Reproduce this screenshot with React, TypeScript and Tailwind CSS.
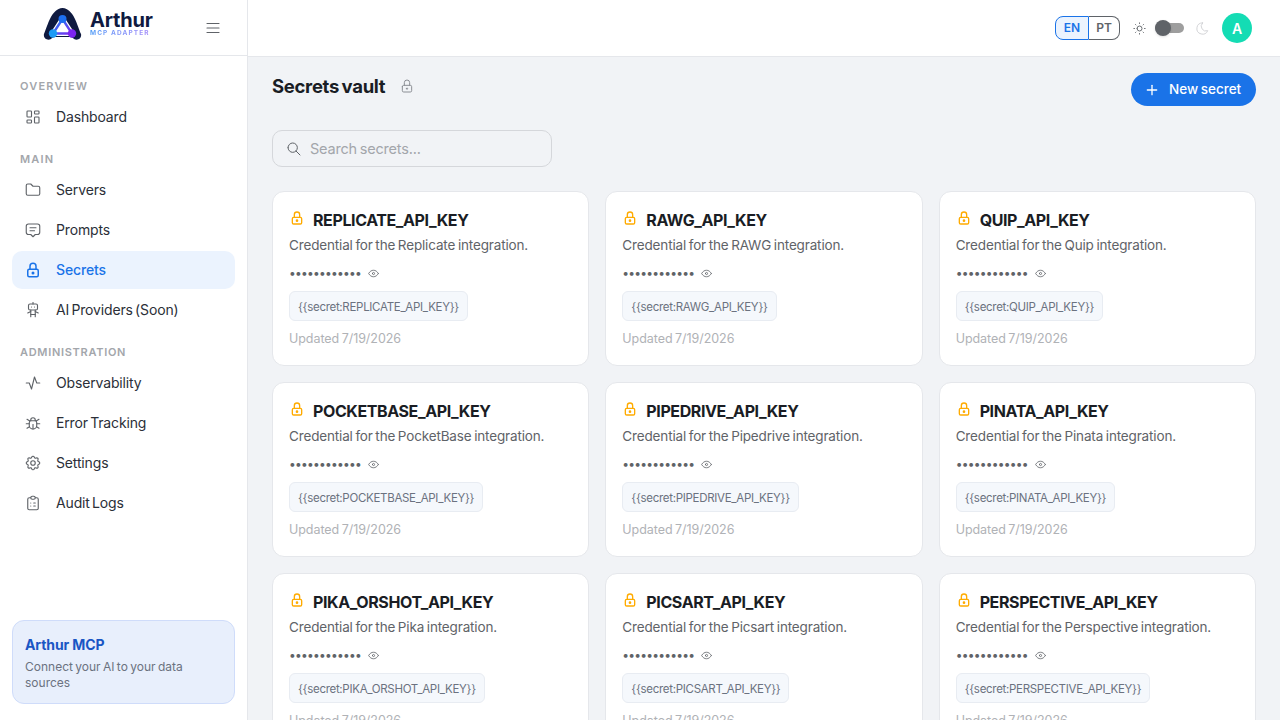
import { TbLayoutDashboard, TbFolder, TbMessage2, TbLock, TbRobot, TbActivity, TbBug, TbSettings, TbClipboardList, TbMenu2, TbSun, TbMoon, TbPlus, TbEye, TbSearch } from "react-icons/tb"

const sections = [
  { title: "OVERVIEW", top: "pt-[22px]", track: "tracking-[1.2px]", items: [{ label: "Dashboard", icon: TbLayoutDashboard }] },
  {
    title: "MAIN",
    top: "pt-[15px]",
    track: "tracking-[1.2px]",
    items: [
      { label: "Servers", icon: TbFolder },
      { label: "Prompts", icon: TbMessage2 },
      { label: "Secrets", icon: TbLock, active: true },
      { label: "AI Providers (Soon)", icon: TbRobot },
    ],
  },
  {
    title: "ADMINISTRATION",
    top: "pt-[15px]",
    track: "tracking-[0.7px]",
    items: [
      { label: "Observability", icon: TbActivity },
      { label: "Error Tracking", icon: TbBug },
      { label: "Settings", icon: TbSettings },
      { label: "Audit Logs", icon: TbClipboardList },
    ],
  },
]

const secrets = [
  { key: "REPLICATE_API_KEY", name: "Replicate" },
  { key: "RAWG_API_KEY", name: "RAWG" },
  { key: "QUIP_API_KEY", name: "Quip" },
  { key: "POCKETBASE_API_KEY", name: "PocketBase" },
  { key: "PIPEDRIVE_API_KEY", name: "Pipedrive" },
  { key: "PINATA_API_KEY", name: "Pinata" },
  { key: "PIKA_ORSHOT_API_KEY", name: "Pika" },
  { key: "PICSART_API_KEY", name: "Picsart" },
  { key: "PERSPECTIVE_API_KEY", name: "Perspective" },
]

function Logo() {
  return (
    <div className="flex items-center gap-[8px] mb-[8px] ml-[-1px]">
      <svg width="39" height="32" viewBox="0 0 39 32">
        <defs>
          <linearGradient id="tri" x1="0" y1="0" x2="1" y2="1">
            <stop offset="0" stopColor="#1d7cf2" />
            <stop offset="1" stopColor="#7c2ff0" />
          </linearGradient>
        </defs>
        <path d="M1 26C5 17 8 1 19.500 0 31 1 34 17 38 26c1 4-3 7-7 5-1-1-2-2-4-2H12c-2 0-3 1-4 2-4 2-8-1-7-5z" fill="#0f1a40" />
        <path d="M19.500 11 10 25.500h19z" fill="#ffffff" stroke="#ffffff" strokeWidth="5" strokeLinejoin="round" />
        <path d="M19.500 11 10 25.500h19z" fill="#ffffff" stroke="url(#tri)" strokeWidth="2.400" />
        <circle cx="19.500" cy="11" r="4" fill="#1d6ff0" />
        <circle cx="10" cy="25.500" r="4.200" fill="#1d9bf5" />
        <circle cx="29" cy="25.500" r="4.200" fill="#7c24f0" />
      </svg>
      <div className="flex flex-col mt-[3px]">
        <span className="text-[20px] leading-[14px] font-bold text-[#0f1a40] tracking-[-0.2px]">Arthur</span>
        <span className="text-[6.500px] leading-[7px] font-bold tracking-[1.100px] mt-[3px] bg-linear-to-r from-[#4f9cf7] to-[#a78bfa] bg-clip-text text-transparent">MCP ADAPTER</span>
      </div>
    </div>
  )
}

function Sidebar() {
  return (
    <aside className="w-[248px] shrink-0 h-full flex flex-col bg-white border-r border-[#e5e7eb]">
      <div className="h-[56px] shrink-0 border-b border-[#e5e7eb] flex items-center pl-[44px] pr-[25px] justify-between">
        <Logo />
        <TbMenu2 strokeWidth={1.5} className="w-[18px] h-[18px] text-[#5f6368]" />
      </div>
      <nav className="px-3 flex-1">
        {sections.map((s) => (
          <div key={s.title} className={s.top}>
            <div className={`px-2 text-[11px] leading-[16px] font-semibold text-[#a3a6ab] mb-[4px] ${s.track}`}>{s.title}</div>
            <div className="flex flex-col gap-[2px]">
              {s.items.map((item) => {
                const Icon = item.icon
                return (
                  <div
                    key={item.label}
                    className={
                      item.active
                        ? "h-[38px] rounded-[10px] bg-[#ebf3fe] flex items-center pl-3 gap-[14px] text-[#1a73e8] font-medium text-[14px]"
                        : "h-[38px] rounded-[10px] flex items-center pl-3 gap-[14px] text-[#2b2f38] font-normal text-[14px]"
                    }
                  >
                    <Icon
                      strokeWidth={item.active ? 2 : 1.5}
                      className={item.active ? "w-[18px] h-[18px] text-[#1a73e8] mb-[1px]" : "w-[18px] h-[18px] text-[#5f6368] mb-[1px]"}
                    />
                    <span className="pb-[1px] tracking-[-0.15px] [word-spacing:-1.500px]">{item.label}</span>
                  </div>
                )
              })}
            </div>
          </div>
        ))}
      </nav>
      <div className="mx-3 mb-4 h-[84px] rounded-[12px] bg-[#e8effc] border border-[#cfdcfa] px-3 pt-[15px]">
        <div className="text-[14px] leading-[18px] font-bold text-[#1a56c4] tracking-[-0.1px]">Arthur MCP</div>
        <div className="mt-[5px] text-[12px] leading-[16px] text-[#6b7280] [word-spacing:-1px]">Connect your AI to your data sources</div>
      </div>
    </aside>
  )
}

function Header() {
  return (
    <header className="h-[57px] shrink-0 bg-white border-b border-[#e5e7eb] flex items-center justify-end pr-[28px]">
      <div className="flex h-[24px] text-[12px] font-semibold mr-[12px]">
        <div className="w-[34px] rounded-l-[8px] border border-[#1a73e8] bg-[#ebf3fe] text-[#1a73e8] flex items-center justify-center">EN</div>
        <div className="w-[31px] rounded-r-[8px] border border-l-0 border-[#5f6368] text-[#5f6368] flex items-center justify-center">PT</div>
      </div>
      <TbSun strokeWidth={1.5} className="w-[15px] h-[15px] text-[#5f6368]" />
      <div className="relative ml-[8px] w-[29px] h-[10px] rounded-full bg-[#9e9e9e]">
        <div className="absolute left-0 top-[-3px] w-[16px] h-[16px] rounded-full bg-[#5f6368] shadow" />
      </div>
      <TbMoon strokeWidth={1.5} className="ml-[11px] w-[15px] h-[15px] text-[#d0d1d4]" />
      <div className="ml-[12px] w-[30px] h-[30px] rounded-full bg-[#14dcb4] flex items-center justify-center text-white text-[14px] font-semibold">A</div>
    </header>
  )
}

function SecretCard({ k, name }: { k: string; name: string }) {
  return (
    <div className="h-[175px] rounded-[12px] bg-white border border-[#e5e7eb] px-4 pt-[16px]">
      <div className="flex items-center gap-[8px] h-[24px]">
        <TbLock className="w-[16px] h-[16px] text-[#ffab00] mt-[-4px]" />
        <span className="text-[16px] font-bold text-[#1a1d24] tracking-[-0.4px]">{k}</span>
      </div>
      <div className="mt-[3px] text-[13.500px] leading-[21px] text-[#5f6368] tracking-[-0.15px] [word-spacing:-1px]">Credential for the {name} integration.</div>
      <div className="mt-[9px] flex items-center h-[16px] gap-[6px]">
        <span className="text-[12px] leading-[16px] text-[#5f6368] tracking-[-0.75px]">••••••••••••</span>
        <TbEye strokeWidth={1.5} className="w-[13px] h-[13px] text-[#5f6368]" />
      </div>
      <div className="mt-[10px] inline-flex items-center h-[30px] px-2 pt-[4px] rounded-[6px] bg-[#f5f8fc] border border-[#e8ecf2] text-[11.500px] text-[#6b7280] tracking-[-0.3px] whitespace-nowrap">
        {`{{secret:${k}}}`}
      </div>
      <div className="mt-[9px] text-[12.500px] leading-[18px] text-[#b0b2b6] tracking-[-0.05px] [word-spacing:-1px]">Updated 7/19/2026</div>
    </div>
  )
}

export default function App() {
  return (
    <div className="w-[1280px] h-[720px] overflow-hidden flex bg-[#f1f3f6] font-['Inter',sans-serif]">
      <Sidebar />
      <div className="flex-1 flex flex-col min-w-0">
        <Header />
        <main className="px-6 flex-1 overflow-hidden">
          <div className="flex justify-between items-start pt-[16px] h-[73px]">
            <div className="flex items-center gap-[14px] h-[27px]">
              <h1 className="text-[18.500px] font-bold text-[#1a1d24] tracking-[-0.3px] [word-spacing:-1.500px]">Secrets vault</h1>
              <TbLock strokeWidth={1.5} className="w-[16px] h-[16px] text-[#8b8e94] mt-[-2px]" />
            </div>
            <button className="h-[33px] w-[125px] rounded-full bg-[#1a73e8] text-white flex items-center pl-[13px] gap-[9px] text-[13.500px] font-medium">
              <TbPlus className="w-[16px] h-[16px]" />
              <span className="[word-spacing:-1px]">New secret</span>
            </button>
          </div>
          <div className="w-[280px] h-[37px] rounded-[10px] border border-[#d5d7db] flex items-center pl-[13px] gap-[8px]">
            <TbSearch strokeWidth={1.5} className="w-[16px] h-[16px] text-[#5f6368]" />
            <span className="text-[14.500px] text-[#a3a6ab] pt-[1px] tracking-[-0.2px] [word-spacing:-1px]">Search secrets...</span>
          </div>
          <div className="mt-[24px] grid grid-cols-3 gap-4">
            {secrets.map((s) => (
              <SecretCard key={s.key} k={s.key} name={s.name} />
            ))}
          </div>
        </main>
      </div>
    </div>
  )
}
